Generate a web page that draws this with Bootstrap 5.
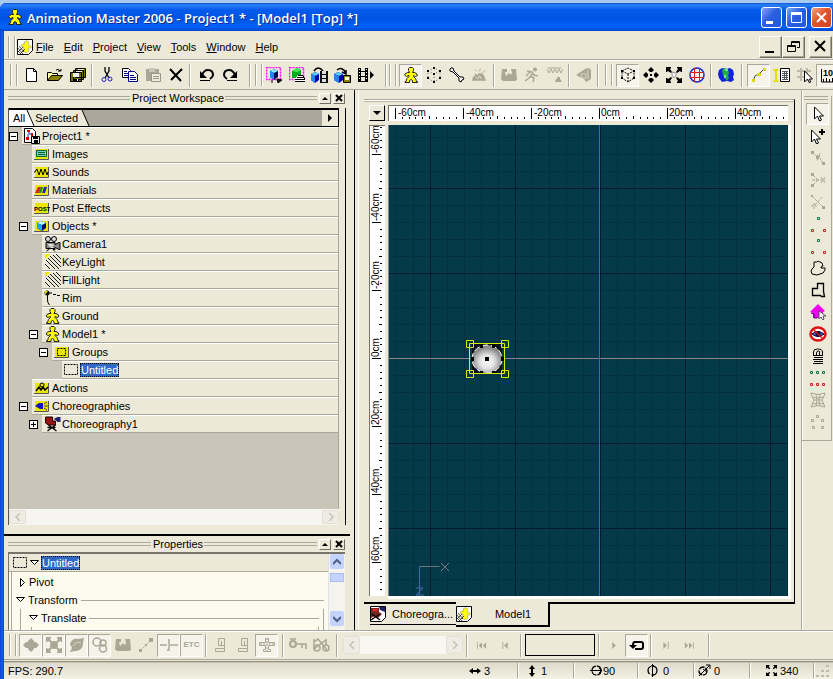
<!DOCTYPE html>
<html lang="en">
<head>
<meta charset="utf-8">
<meta name="viewport" content="width=device-width, initial-scale=1">
<title>Animation Master 2006</title>
<link href="https://cdn.jsdelivr.net/npm/bootstrap@5.3.0/dist/css/bootstrap.min.css" rel="stylesheet">
<style>
:root{--face:#ece9d8;--shade:#aca899;--dim:#aaa797;--sel:#316ac5}
body{font:11px/14px "Liberation Sans",Arial,sans-serif;color:#000;background:#a9c9ee}
button{font:inherit;color:inherit;background:none;border:0;padding:0}
svg{display:block;flex:none}
.app{height:100vh;padding-top:3px}
.frame{background:linear-gradient(90deg,#0a3fd0,#1560f0 2px,#0a3fd0 4px,#0a3fd0);padding-left:4px;border-radius:6px 0 0 0;min-height:0}
.inner{background:var(--face);min-height:0}
.titlebar{height:28px;margin-left:-4px;padding:0 1px 0 7px;border-radius:6px 0 0 0;background:linear-gradient(#0b52cf,#2b80fa 2px,#0559ec 7px,#0054e3 16px,#0162fb 24px,#0046c8)}
.titlebar h1{font:600 13px/16px "Open Sans","Noto Sans",sans-serif;color:#fff;text-shadow:1px 1px #0a2a90;margin:2px 0 0 4px}
.wbtn{width:21px;height:21px;border:1px solid #fff;border-radius:3px;background:linear-gradient(135deg,#7fa5f5,#2a5fe0 45%,#2357dd)}
.wbtn.shut{background:linear-gradient(135deg,#f0a18a,#e2532c 45%,#cf4320)}
.menubar{height:29px;border-bottom:1px solid var(--shade);padding:3px 1px 0 4px}
.menubar .grip{margin-right:2px}
.menubar svg.doc-ic{margin-right:3px}
.menubar a{color:#000;text-decoration:none;margin-right:10px}
.menubar u{text-decoration:underline;text-underline-offset:1px}
.mbtn{width:23px;height:22px;border:1px solid;border-color:#fff #716f64 #716f64 #fff;box-shadow:inset -1px -1px var(--shade)}
.tools{height:30px;border-top:1px solid #fff;border-bottom:1px solid var(--shade);overflow:hidden;padding-left:6px}
.grip{width:7px;height:22px;flex:none;border-left:1px solid var(--shade);border-right:1px solid var(--shade);box-shadow:inset 1px 0 #fff,inset -2px 0 var(--face),1px 0 #fff;margin-right:3px}
.tb{width:23px;height:23px;flex:none;display:flex;align-items:center;justify-content:center;border:1px solid transparent}
.on{border-color:var(--shade) #fff #fff var(--shade);background:#f5f3ea}
.etc{font-size:8px;font-weight:700}
.sep{width:2px;height:23px;flex:none;margin:0 2px;border-left:1px solid var(--shade);border-right:1px solid #fff}
.off{color:var(--dim)}
.work{min-height:0}
.left{width:346px;flex:none;padding:0 5px 0 4px}
.paneltitle{height:16px;gap:2px}
.paneltitle i{flex:1;height:4px;border:solid var(--shade);border-width:1px 0}
.paneltitle h2{font-size:11px;line-height:14px;margin:0;font-weight:400}
.paneltitle h2{margin-right:-1px}
.paneltitle i.lead-rule{flex:1 1 30px}
.paneltitle i.tail-rule{flex:1 1 0}
.pbtn{width:12px;height:11px;border:1px solid;border-color:#fff #716f64 #716f64 #fff}
.treebox{flex:1 1 0;min-height:0;border-left:1px solid #555;border-right:1px solid #000;padding-right:6px;margin:2px -1px 0 0}
.tabstrip{height:19px;background:#aca79c;border:solid #000;border-width:2px 1px 1px 0;flex:none}
.tab-t{height:16px;line-height:17px}
.tab-plain{background:var(--face)}
.tree{flex:1 1 0;min-height:0;background:#c9c5b8;list-style:none;margin:0;padding:0;border-right:1px solid var(--shade)}
.tree li{display:flex;height:18px;align-items:center}
.trow{flex:1;height:18px;display:flex;align-items:center;gap:2px;background:var(--face);border-top:1px solid #fff;border-bottom:1px solid var(--shade);padding-left:2px}
.l2 .trow{gap:1px}
.exp{width:9px;height:9px;flex:none;background:#fff;border:1px solid #000;margin-right:4px;display:block;position:relative}
.exp::after,.exp.plus::before{content:"";position:absolute;left:1px;top:3px;width:5px;height:1px;background:#000}
.exp.plus::before{left:3px;top:1px;width:1px;height:5px}
.noexp{width:13px;flex:none}
.l1{padding-left:10px}.l2{padding-left:20px}.l3{padding-left:30px}.l4{padding-left:40px}
.pick{background:var(--sel);color:#fff;outline:1px dotted #000;outline-offset:-1px;padding:0 1px}
.hbar{height:16px;background:#f6f5f1;flex:none}
.sbtn{width:17px;height:14px;background:#eeece4;color:#c5c2b6;display:flex;align-items:center;justify-content:center;border:1px solid #e4e1d4;border-radius:2px}
.props{height:96px;flex:none;border-top:2px solid #000;margin:9px -5px 0 -4px;padding:0 5px 0 4px}
.propbox{border:solid #77756b;border-width:2px 0 0 1px;background:#fdfbee;height:78px;overflow:hidden}
.propbox .head{height:18px;gap:3px;background:var(--face);border-bottom:1px solid var(--shade);padding-left:4px}
.propbox .head .pick{margin-left:-1px}
.prow{height:18px;display:flex;align-items:center;gap:3px}
.prow b{flex:1;height:1px;background:var(--shade);font-weight:400}
.lvl-a{margin:0 4px 0 2px;padding-top:1px}
.lvl-b{margin-left:8px}
.lvl-c{margin:0 4px 0 10px;height:14px}
.vbar{width:16px;background:#f4f3ee;flex:none}
.vbar button{width:14px;height:15px;background:#c3d3fd;color:#4d6185;border-radius:2px;display:flex;align-items:center;justify-content:center}
.thumb{width:14px;height:9px;background:#c3d3fd;border:1px solid #a9bff0}
.child{border:solid var(--shade);border-width:0 1px 0 1px}
.gap-bar{width:5px;flex:none;border-left:1px solid #000;border-right:1px solid #fff}
.doc{flex:1;min-width:0;min-height:0;padding:9px 6px 0 3px}
.docwin{flex:1;min-height:0;border-top:1px solid var(--shade);border-right:1px solid #000;border-bottom:2px solid #000;box-shadow:inset 0 1px #fff,inset 0 2px #bbb8aa;padding:5px 6px 6px 5px;margin-left:2px}
.viewrow{gap:3px;min-height:0}
.rulerbox{background:#fff;border:solid #77756b;border-width:1px 0 0 1px;overflow:hidden}
.corner{width:16px;height:16px;border:1px solid;border-color:#fff #000 #000 #fff;flex:none}
.ruler{font:10px "Liberation Sans",Arial,sans-serif}
.view{background:#053a4a;min-width:0;border-left:1px solid #888;box-shadow:3px 0 #fff,0 3px #fff,3px 3px #fff}
.dtabs{height:26px;flex:none;padding-left:8px}
.dtab{height:21px;width:86px;border-bottom:1px solid #000;display:flex;align-items:center;gap:6px}
.dtab.now{width:94px;height:25px;margin-top:-2px;background:var(--face);border-right:2px solid #000;border-bottom:2px solid #000}
.side{width:32px;flex:none;border-left:1px solid var(--shade);padding-top:6px;box-shadow:inset 1px 0 #fff}
.sidebox{border:solid var(--shade);border-width:0 1px 1px 0;width:30px;padding:0 0 7px 4px}
.sidebox .tb{height:22px}
.sgrip{width:24px;height:4px;border:solid var(--shade);border-width:1px 0;margin:0 0 3px -2px}
.bottom{height:30px;border-top:1px solid var(--shade);border-bottom:1px solid var(--shade);box-shadow:inset 0 1px #fff;overflow:hidden;padding-left:5px}
.slide{width:120px;height:18px;background:#f8f7f2;margin:0 1px}
.slide .sbtn{height:18px}
.frameno{width:70px;height:22px;border:1px solid #000;background:var(--face);border-radius:0;font-size:11px;padding:0 4px;margin:0 1px}
.status{height:18px;margin-top:1px;border-top:1px solid #8f8c80;box-shadow:inset 0 1px #c8c5b6;background:linear-gradient(#dedac9,#f3f1e4)}
.cell{height:15px;border-right:1px solid var(--shade);box-shadow:1px 0 #fff;display:flex;align-items:center;gap:3px}
.c0{width:49px}.c1{width:56px}.c2{width:64px}
</style>
</head>
<body class="overflow-hidden">
<svg width="0" height="0" class="position-absolute" aria-hidden="true">
<defs>
<symbol id="man" viewBox="0 0 16 16"><path d="M6.500.5h3l1 1v2l-1 2h2l2 1 1 2-2 1-2-1v1l2 2 1 3h1v1h-5v-2l-1.500-1-1.500 1v2H2v-1h1l1-3 2-2v-1L3.500 9.500 1.500 8l1-1.500 2-1h2l-1-2v-2z" fill="#ff0" stroke="#222"/></symbol>
<symbol id="manbox" viewBox="0 0 16 16"><path d="M.5.5h15v11l-4 4H.5z" fill="#fff" stroke="#000"/><path d="M8 2h3l1 2-1 2 3 1v2h-3l1 3-3 2-3-2 1-4-3-1 1-2h3L7 4z" fill="#ff0" stroke="#aa9" stroke-width=".7"/><path d="M0 8l6 7M0 11l4 4M2 7l5 6M0 14l6-6M3 15l5-5" stroke="#221" stroke-width=".8"/></symbol>
<symbol id="new" viewBox="0 0 16 16"><path d="M2.500 1.500h7l3 3v10h-10z" fill="#fff" stroke="#000"/><path d="M9.500 1.500v3h3" fill="none" stroke="#000"/></symbol>
<symbol id="open" viewBox="0 0 16 16"><path d="M.5 13.500v-8h4l1 1h5v2" fill="#ffffb0" stroke="#000"/><path d="M.5 13.500l4-5h11l-4 5z" fill="#8a8200" stroke="#000"/><path d="M9 3q3-2 4 1m-2 0h3V2" fill="none" stroke="#000"/></symbol>
<symbol id="saveall" viewBox="0 0 16 16"><path d="M5.500 1.500h10v9h-10zM3.500 3.500h10v9h-10zM.5 5.500h11v9H.5z" fill="#777000" stroke="#000"/><path d="M3 6h6v4H3zM6 4h6v1H6zM8 2h6v1H8z" fill="#eee"/><path d="M3 12h6v3H3z" fill="#000"/><path d="M7 12h1v2H7z" fill="#fff"/></symbol>
<symbol id="cut" viewBox="0 0 16 16"><path d="M6 0v4l4 7M10 0v4L6 11" fill="none" stroke="#000" stroke-width="1.300"/><circle cx="5" cy="12.500" r="2" fill="none" stroke="#22c"/><circle cx="11" cy="12" r="2" fill="none" stroke="#22c"/></symbol>
<symbol id="copy" viewBox="0 0 16 16"><path d="M.5 1.500h6l2 2v7h-8z" fill="#fff" stroke="#000"/><path d="M6.500 4.500h6l3 3v7h-9z" fill="#fff" stroke="#008"/><path d="M2 4.500h3M2 6.500h4M2 8.500h4M8 8.500h4M8 10.500h6M8 12.500h6" stroke="#008"/></symbol>
<symbol id="paste" viewBox="0 0 16 16"><path d="M1 2h13v12H1z" fill="#aaa797"/><path d="M4 1h6v4H4z" fill="#c9c6b7"/><path d="M6.500 6.500h9v8h-9z" fill="#eeebdd" stroke="#999688"/><path d="M8 9.500h6M8 11.500h6" stroke="#999688"/></symbol>
<symbol id="del" viewBox="0 0 16 16"><path d="M2 2l11 12M14 2L3 13" stroke="#000" stroke-width="2"/></symbol>
<symbol id="undo" viewBox="0 0 16 16"><path d="M3 8q2-5 6-5 5 0 5 5 0 2-3 4" fill="none" stroke="#000" stroke-width="2"/><path d="M1 4v7h7zM1 13h10v1H1z"/></symbol>
<symbol id="redo" viewBox="0 0 16 16"><path d="M13 8q-2-5-6-5-5 0-5 5 0 2 3 4" fill="none" stroke="#000" stroke-width="2"/><path d="M15 4v7H8zM5 13h10v1H5z"/></symbol>
<symbol id="selcube" viewBox="0 0 16 16"><path d="M.5.500h14v12H.5z" fill="none" stroke="#f0f" stroke-width="1.500" stroke-dasharray="2 1"/><path d="M4 4l4-2 4 2v6l-4 3-4-3z" fill="#006"/><path d="M4 4l4-2 4 2-4 2z" fill="#8ef"/><path d="M4 4l4 2v7l-4-3z" fill="#28f"/><path d="M6 13v3M11 12l5 1-4 3z" stroke="#000"/></symbol>
<symbol id="selgreen" viewBox="0 0 16 16"><path d="M.5.500h14v12H.5z" fill="none" stroke="#f0f" stroke-width="1.500" stroke-dasharray="2 1"/><path d="M3 4l5-3 4 2v8H3z" fill="#0a2"/><path d="M3 4l5-3 4 2-4 2z" fill="#4e5"/><path d="M6 12l3-4h5l2 5v2H6z" fill="#fff"/><path d="M6 14.500h10M6 12.500h10M8 10.500h7M9 8.500h5l2 4" fill="none" stroke="#000"/></symbol>
<symbol id="cubefilm" viewBox="0 0 17 16"><path d="M0 7l4-2 4 2v6l-4 3-4-3z" fill="#00a"/><path d="M0 7l4-2 4 2-4 2z" fill="#5cf"/><path d="M0 7l4 2v7l-4-3z" fill="#28e"/><path d="M3 4q4-6 9 0" fill="none" stroke="#000" stroke-width="1.500"/><path d="M9 4h8v12H9z" fill="#111"/><path d="M11 4h4v3h-4zM11 8h4v3h-4zM11 12h4v3h-4z" fill="#ddd"/></symbol>
<symbol id="cubesave" viewBox="0 0 17 16"><path d="M0 7l4-2 5 2v6l-4 3-5-3z" fill="#00a"/><path d="M0 7l4-2 5 2-4 2z" fill="#5cf"/><path d="M0 7l5 2v7l-5-3z" fill="#28e"/><path d="M3 3q5-4 9 3m-4-1 4 2V3" fill="none" stroke="#000" stroke-width="1.500"/><path d="M9.500 8.500h7v7h-7z" fill="#8a8200" stroke="#000"/><path d="M11 10h4v3h-4z" fill="#ffe"/></symbol>
<symbol id="film" viewBox="0 0 16 16"><path d="M0 1h10v14H0z" fill="#000"/><path d="M3 1h4v3H3zM3 5h4v4H3zM3 10h4v4H3z" fill="#ece9d8"/><path d="M1 2h1v1H1zM1 5h1v1H1zM1 8h1v1H1zM1 11h1v1H1zM8 2h1v1H8zM8 5h1v1H8zM8 8h1v1H8zM8 11h1v1H8z" fill="#fff"/><path d="M12 4l4 4-4 4z"/></symbol>
<symbol id="dots" viewBox="0 0 16 16"><path d="M2 4l6-3 6 3v7l-6 4-6-4zM2 4l6 3 6-3M8 7v8" fill="none" stroke="#666" stroke-dasharray="1 2"/><path d="M1 3h2v2H1zM7 0h2v2H7zM13 3h2v2h-2zM1 10h2v2H1zM7 14h2v2H7zM13 10h2v2h-2zM7 6h2v2H7z"/></symbol>
<symbol id="cubeline" viewBox="0 0 16 16"><path d="M2 4l6-3 6 3v7l-6 4-6-4zM2 4l6 3 6-3M8 7v8" fill="none" stroke="#000" stroke-dasharray="2 1"/><path d="M1 3h2v2H1zM13 3h2v2h-2zM1 10h2v2H1zM13 10h2v2h-2z"/></symbol>
<symbol id="bone" viewBox="0 0 16 16"><path d="M2 1l2 0 1 3 6 6 3 0 1 2-2 1-1 2-2-1 0-3-6-6-3-1 0-2z" fill="#fff" stroke="#000"/></symbol>
<symbol id="blob" viewBox="0 0 16 16"><path d="M0 14l1-4 2-1 0-3 3 2 1-2h4l2 3 2 5v0z" fill="currentColor"/><path d="M3 2l2 2M9 1l-1 3M14 3l-3 3" stroke="currentColor"/><path d="M4 10l2 2 2-3 2 3" stroke="#ece9d8" fill="none"/></symbol>
<symbol id="arm" viewBox="0 0 16 16"><path d="M1 2h5v3H4l1 4 3-3 2 2 1-2-1-4h5l1 11-2 1H2L0 12z" fill="currentColor"/></symbol>
<symbol id="run" viewBox="0 0 16 16"><circle cx="11" cy="2.500" r="2" fill="currentColor"/><path d="M3 4l5 1 2 3 4 1M9 6l-4 5-4 3M6 9l4 2-1 4M2 9l4-4" fill="none" stroke="currentColor" stroke-width="1.500"/></symbol>
<symbol id="waves" viewBox="0 0 16 16"><path d="M0 2l2 4 2-4 2 4 2-4 2 4 2-4 2 4 2-4M1 1h13" fill="none" stroke="currentColor"/><path d="M8 15l1-3h1v-2h3v2l2 3z" fill="currentColor"/></symbol>
<symbol id="horn" viewBox="0 0 16 16"><path d="M0 8l9-6 4-1 2 2v9l-5 3-2-3z" fill="currentColor"/><path d="M5 7h5v4H6zM12 3v9" fill="none" stroke="#d8d5c5"/></symbol>
<symbol id="move" viewBox="0 0 16 16"><path d="M8 0l3 3-2 2H7L5 3zM8 16l3-3-2-2H7l-2 2zM0 8l3-3 2 2v2l-2 2zM16 8l-3-3-2 2v2l2 2z" fill="currentColor"/><path d="M7 7h2v2H7z" fill="currentColor"/></symbol>
<symbol id="zoomx" viewBox="0 0 16 16"><path d="M0 0h5v1L4 2l2 3-1 1-3-2-1 1H0zM16 0h-5v1l1 1-2 3 1 1 3-2 1 1h1zM0 16h5v-1l-1-1 2-3-1-1-3 2-1-1H0zM16 16h-5v-1l1-1-2-3 1-1 3 2 1-1h1z" fill="currentColor"/></symbol>
<symbol id="zoomlens" viewBox="0 0 16 16"><use href="#zoomx"/><path d="M6 5l4 1v2l-2 3-2-3z" fill="#fff" stroke="#999"/></symbol>
<symbol id="orbit" viewBox="0 0 16 16"><circle cx="8" cy="8" r="7" fill="#f2f0ee" stroke="#22c" stroke-width="1.500"/><path d="M5.500 1v14M10.500 1v14M1 5.500h14M1 10.500h14" stroke="#c22" fill="none"/></symbol>
<symbol id="globe" viewBox="0 0 18 16"><path d="M2 3l3-2 4 1 4-1 3 2 1 4-1 3 1 3-3 2-4-1-5 1-3-4-1-4z" fill="#12d"/><path d="M5 3l3-2 3 2 1 3-1 3 1 2-2 3-2-3-2-3z" fill="#2a4"/><path d="M8 2h3v2H8zM7 8h2v3H7z" fill="#6e8"/></symbol>
<symbol id="curve" viewBox="0 0 16 16"><path d="M2 14l2-5 5-3 5-5" fill="none" stroke="#444"/><path d="M1 12h3v3H1zM6 6h4v3H6zM12 1h3v3h-3z" fill="#dcdc00"/></symbol>
<symbol id="panel" viewBox="0 0 17 16"><path d="M0 2h6L4 5v7l2 3H0l2-3V5z" fill="#e5e000"/><path d="M7.500 1.500h9v13h-9z" fill="#fff" stroke="#000"/><path d="M9 4.500h6M9 6.500h6M9 8.500h6M9 10.500h6M9 12.500h6M11.500 4v9M13.500 4v9" stroke="#555"/></symbol>
<symbol id="gridcur" viewBox="0 0 16 16"><path d="M0 4h14M0 10h14M4 1v13M10 1v13" stroke="#bcb9a8" stroke-width="2"/><path d="M7.500 4v11l3-3 2 4 1-1-1-3h3z" fill="#fff" stroke="#000"/></symbol>
<symbol id="rule" viewBox="0 0 16 16"><path d="M1.500 2v13h15M3.500 15v-3M6.500 15v-4M9.500 15v-3M12.500 15v-4M15.500 15v-3" fill="none" stroke="#000"/><text x="3" y="9" font-size="9" font-weight="700">10</text></symbol>
<symbol id="proj" viewBox="0 0 16 16"><path d="M.5.5h8l3 3v11H.5z" fill="#fff" stroke="#000"/><path d="M3 3h2v3h3v4h2M4 6v5H2" stroke="#22c" fill="none"/><path d="M3 2h3v2H3zM7 5h2v3H7zM2 9h3v3H2z" fill="#d00"/><path d="M7.500 8.500h8v7h-8z" fill="#eee" stroke="#000"/><path d="M10 12h4v3h-4zM9 9h5v2H9z"/></symbol>
<symbol id="fold" viewBox="0 0 16 12"><path d="M1 1h14v10H1z" fill="#e9e600"/><path d="M0 11.500h14.500V1" fill="none" stroke="#555"/></symbol>
<symbol id="f-img" viewBox="0 0 16 12"><use href="#fold"/><path d="M2.500 2.500h10v6h-10z" fill="#7cb" stroke="#063"/><path d="M4 4.500h7M4 6.500h7" stroke="#063"/></symbol>
<symbol id="f-snd" viewBox="0 0 16 12"><use href="#fold"/><path d="M0 6h1l2-3 2 6 2-6 2 6 2-6 2 6 1-3" fill="none" stroke="#000"/></symbol>
<symbol id="f-mat" viewBox="0 0 16 12"><use href="#fold"/><path d="M1 9l3-6h3L5 9z" fill="#d22"/><path d="M5 9l2-6h2L7 9z" fill="#182"/><path d="M8 9l2-6h3l-2 6z" fill="#22c"/></symbol>
<symbol id="f-post" viewBox="0 0 16 12"><use href="#fold"/><text x="0" y="9" font-size="6" font-weight="700">POST</text></symbol>
<symbol id="f-obj" viewBox="0 0 16 14"><path d="M1 2h14v10H1z" fill="#e9e600"/><path d="M0 12.500h14.500V2" fill="none" stroke="#555"/><path d="M3 4l4-2 5 2v5l-4 3-5-3z" fill="#007"/><path d="M3 4l4-2 5 2-4 2z" fill="#bff"/><path d="M3 4l5 2v6L3 9z" fill="#1af"/></symbol>
<symbol id="f-grp" viewBox="0 0 16 12"><use href="#fold"/><path d="M3.500 2.500h8v7h-8z" fill="none" stroke="#000" stroke-dasharray="2 1"/></symbol>
<symbol id="f-act" viewBox="0 0 16 12"><use href="#fold"/><circle cx="8" cy="3" r="2" fill="none" stroke="#000"/><path d="M2 9l3-4 2 3 2-3 2 3 3-3" fill="none" stroke="#000" stroke-width="1.500"/></symbol>
<symbol id="f-cho" viewBox="0 0 16 12"><use href="#fold"/><path d="M1 6l4-3h4v6H6z" fill="#11b"/><path d="M10 6h4M10 4l3-2M10 8l3 2" stroke="#444"/></symbol>
<symbol id="cam" viewBox="0 0 16 16"><circle cx="3.500" cy="3" r="2.500" fill="#ddd" stroke="#000"/><circle cx="9.500" cy="3" r="2.500" fill="#ddd" stroke="#000"/><path d="M1.500 6.500h9v2l4-2h1v7h-1l-4-2v2h-2l2 2M5 13l-3 2M1.500 6.500v6h9" fill="#888" stroke="#000"/><path d="M4 8h5v2H4z" fill="#ddd"/></symbol>
<symbol id="light" viewBox="0 0 17 16"><path d="M1 0h5L4 3 1 5z" fill="#f0ec00"/><path d="M6 2l11 11M4 4l11 11M2 6l9 9M1 10l5 5M9 1l8 8M12 0l5 5" stroke="#000" stroke-width=".9" fill="none"/></symbol>
<symbol id="rim" viewBox="0 0 17 16"><circle cx="3" cy="3" r="2.500"/><path d="M1 1h3L1 5z" fill="#dd0"/><path d="M5 3l3 0M9 4.500h3M13 5.500h3M3.500 5v5q0 3 2 5" fill="none" stroke="#000"/></symbol>
<symbol id="group" viewBox="0 0 14 12"><path d="M.5.5h13v10H.5z" fill="none" stroke="#000" stroke-dasharray="2 1"/></symbol>
<symbol id="chair" viewBox="0 0 16 16"><path d="M1 1h7v4h3v4H4L1 7z" fill="#911" stroke="#200"/><path d="M9 3l4-2 3 0v5h-3l-2-2z" fill="#226"/><path d="M3 15l8-6M12 15L4 9M3 11.500h8" stroke="#000" stroke-width="1.300"/></symbol>
<symbol id="chairbox" viewBox="0 0 16 16"><path d="M.5.5h15v11l-4 4H.5z" fill="#fff" stroke="#000"/><path d="M1 2h8v4l3 2-4 4-3-2-4 2z" fill="#822"/><path d="M9 1h6v5l-5-2z" fill="#226"/><path d="M1 14l9-6M2 8l8 6" stroke="#000" stroke-width="1.500"/><path d="M3 3h4v2H3z" fill="#f22"/></symbol>
<symbol id="tri-d" viewBox="0 0 9 6"><path d="M.5.5h8l-4 4z" fill="#fff" stroke="#000"/></symbol>
<symbol id="tri-r" viewBox="0 0 6 9"><path d="M.5.5v8l4-4z" fill="#fff" stroke="#000"/></symbol>
<symbol id="ch-l" viewBox="0 0 8 8"><path d="M6 0L2 4l4 4" fill="none" stroke="currentColor" stroke-width="1.500"/></symbol>
<symbol id="ch-r" viewBox="0 0 8 8"><path d="M2 0l4 4-4 4" fill="none" stroke="currentColor" stroke-width="1.500"/></symbol>
<symbol id="ch-u" viewBox="0 0 8 8"><path d="M0 6l4-4 4 4" fill="none" stroke="currentColor" stroke-width="2"/></symbol>
<symbol id="ch-d" viewBox="0 0 8 8"><path d="M0 2l4 4 4-4" fill="none" stroke="currentColor" stroke-width="2"/></symbol>
<symbol id="arrow" viewBox="0 0 16 16"><path d="M4.500 1v12l3-3 2 5 2-1-2-4h4z" fill="#fff" stroke="#000"/></symbol>
<symbol id="arrowp" viewBox="0 0 16 16"><path d="M1.500 2v12l3-3 2 5 2-1-2-4h4z" fill="#fff" stroke="#000"/><path d="M12 1v6M9 4h6" stroke="#000" stroke-width="2"/></symbol>
<symbol id="n1" viewBox="0 0 16 16"><path d="M2 2l4 4 3-1 2 6 4 2M10 3l-3 8" fill="none" stroke="currentColor" stroke-dasharray="2 1"/><path d="M1 1h3v3H1zM12 12h3v3h-3zM6 6h3v3H6z" fill="currentColor"/></symbol>
<symbol id="n2" viewBox="0 0 16 16"><path d="M2 8h13M3 3l6 6M3 13l6-6M11 5l4 6M15 5l-4 6" stroke="currentColor" fill="none" stroke-dasharray="3 1"/><path d="M1 1h3v3H1zM1 12h3v3H1z" fill="currentColor"/></symbol>
<symbol id="n3" viewBox="0 0 16 16"><path d="M2 2l5 5 6 6M12 3L5 11M1 12h6M4 9v6" stroke="currentColor" fill="none" stroke-dasharray="3 1"/><path d="M1 1h2v2H1zM12 12h3v3h-3z" fill="currentColor"/></symbol>
<symbol id="tripts" viewBox="0 0 16 16"><path d="M7.500 1.500h2v2h-2z" fill="none" stroke="#174"/><path d="M1.500 13.500h2v2h-2zM13.500 13.500h2v2h-2z" fill="none" stroke="#c22"/></symbol>
<symbol id="lasso" viewBox="0 0 16 16"><path d="M4 2h3l1-1 4 2 1 3-2 1v1h4v2l-2 3-6 2-5-1-1-3 1-2 2-2z" fill="none" stroke="#000"/></symbol>
<symbol id="poly" viewBox="0 0 16 16"><path d="M7.500 1.500h6v8l1 5h-3l-1-1h-8v-7h5z" fill="none" stroke="#000" stroke-width="1.300"/></symbol>
<symbol id="house" viewBox="0 0 16 16"><path d="M8 0l3 3 4 4-2 1v6H3V9L0 8z" fill="#e0e"/><path d="M1 9l3 1v4h3" stroke="#508" fill="none"/><path d="M9 7v8l2-2 2 3 1-1-1-3h3z" fill="#fff" stroke="#555"/></symbol>
<symbol id="eye" viewBox="0 0 18 16"><ellipse cx="9" cy="8" rx="7.500" ry="6.500" fill="#fff" stroke="#d11" stroke-width="2.500"/><path d="M3 8q6-5 12 0-6 5-12 0" fill="#56c" stroke="#003"/><circle cx="9" cy="8" r="2.500" fill="#004"/><path d="M5 4l8 8" stroke="#d11" stroke-width="1.500"/></symbol>
<symbol id="lock" viewBox="0 0 16 16"><path d="M3.500 7V4q0-3 4-3 5 0 5 3v3M6.500 7V5q0-2 2-2t1 2v2" fill="none" stroke="#000"/><path d="M3 7.500h10M4 9.500h9M3 11.500h10M4 13.500h9M3 15.500h10" stroke="#000"/></symbol>
<symbol id="rows" viewBox="0 0 16 16"><path d="M.5 1.500h2v2h-2zM6.500 1.500h2v2h-2zM12.500 1.500h2v2h-2z" fill="none" stroke="#174"/><path d="M.5 13.500h2v2h-2zM6.500 13.500h2v2h-2zM12.500 13.500h2v2h-2z" fill="none" stroke="#c22"/></symbol>
<symbol id="mesh" viewBox="0 0 16 16"><path d="M1 1q7 3 14 0-1 4-3 7l3 7q-7-3-14 0l3-7Q2 5 1 1M2 5q6 2 12 0M4 8h8M2 12q6-2 12 0M6 2q2 6 0 12M10 2q-2 6 0 12" fill="none" stroke="currentColor"/></symbol>
<symbol id="pts" viewBox="0 0 16 16"><path d="M6.500 1.500h2v2h-2zM1.500 5.500h2v2h-2zM11.500 5.500h2v2h-2zM2.500 12.500h2v2h-2zM11.500 12.500h2v2h-2z" fill="none" stroke="currentColor"/></symbol>
<symbol id="diam" viewBox="0 0 16 16"><path d="M8 1l3 3v1l2 0 3 3-3 3h-2v1l-3 3-3-3v-1H3L0 8l3-3h2V4z" fill="currentColor"/></symbol>
<symbol id="scale" viewBox="0 0 16 16"><use href="#zoomx"/><circle cx="8" cy="8" r="4" fill="currentColor"/></symbol>
<symbol id="rot" viewBox="0 0 16 16"><path d="M1 7q2-6 8-5l6-1-1 5q0 8-8 8l-5 1 2-4z" fill="currentColor"/><path d="M4 9q3-5 8-3" fill="none" stroke="#dedbcb"/></symbol>
<symbol id="rings" viewBox="0 0 16 16"><circle cx="5" cy="5" r="4" fill="none" stroke="currentColor" stroke-width="1.500"/><circle cx="11" cy="6" r="3" fill="none" stroke="currentColor" stroke-width="1.500"/><circle cx="11" cy="11.500" r="3.500" fill="none" stroke="currentColor" stroke-width="1.500"/></symbol>
<symbol id="seg" viewBox="0 0 16 16"><path d="M3 13l10-10" stroke="currentColor" stroke-dasharray="2 1"/><path d="M1 12h3v3H1zM7 7h2v2H7zM11 1h4v4h-4z" fill="currentColor"/></symbol>
<symbol id="brk" viewBox="0 0 18 16"><path d="M0 8h7M11 8h7M8 3h1v4l1 1-1 1v4H7" fill="none" stroke="currentColor" stroke-width="1.500"/></symbol>
<symbol id="boxes" viewBox="0 0 16 16"><path d="M5.500 1.500h6v13h-9v-3h9M5.500 1.500v7h6M8.500 4v4" fill="none" stroke="currentColor"/></symbol>
<symbol id="plane" viewBox="0 0 16 16"><path d="M6.500 1.500h3v4h6v3h-6v4h2v2h-7v-2h2v-4h-6v-3h6z" fill="none" stroke="currentColor"/><path d="M8 1v14M1 7h14" stroke="currentColor" stroke-dasharray="2 1"/></symbol>
<symbol id="key" viewBox="0 0 18 16"><circle cx="4" cy="7" r="3" fill="none" stroke="currentColor" stroke-width="2"/><path d="M1 2h6M7 7h10v5M13 7v4" fill="none" stroke="currentColor" stroke-width="1.500"/></symbol>
<symbol id="keys" viewBox="0 0 18 16"><path d="M2 2v10l12-9v5M2 5l4-3 9 11" fill="none" stroke="currentColor" stroke-width="1.500"/><circle cx="5" cy="11" r="3" fill="none" stroke="currentColor" stroke-width="1.500"/><circle cx="14" cy="11" r="3" fill="none" stroke="currentColor" stroke-width="1.500"/></symbol>
<symbol id="first" viewBox="0 0 12 8"><path d="M0 0h1v8H0zM6 0L2 4l4 4zM11 0L7 4l4 4z" fill="currentColor"/></symbol>
<symbol id="prev" viewBox="0 0 8 8"><path d="M1 0h1v8H1zM7 0L3 4l4 4z" fill="currentColor"/></symbol>
<symbol id="play" viewBox="0 0 8 8"><path d="M2 0l4 4-4 4z" fill="currentColor"/></symbol>
<symbol id="next" viewBox="0 0 8 8"><path d="M1 0l4 4-4 4zM6 0h1v8H6z" fill="currentColor"/></symbol>
<symbol id="last" viewBox="0 0 12 8"><path d="M1 0l4 4-4 4zM6 0l4 4-4 4zM11 0h1v8h-1z" fill="currentColor"/></symbol>
<symbol id="loop" viewBox="0 0 16 16"><path d="M6 12h6q2 0 2-2V7q0-2-2-2H6q-2 0-2 3" fill="none" stroke="#000" stroke-width="2"/><path d="M0 8h8l-4 4z"/></symbol>
<symbol id="s-h" viewBox="0 0 12 12"><path d="M0 6l4-3v2h4V3l4 3-4 3V7H4v2z"/></symbol>
<symbol id="s-v" viewBox="0 0 12 12"><path d="M6 0l3 4H7v4h2l-3 4-3-4h2V4H3z"/></symbol>
<symbol id="s-r" viewBox="0 0 13 13"><circle cx="6.500" cy="6.500" r="4.500" fill="none" stroke="#000" stroke-width="1.300" stroke-dasharray="6 1"/><path d="M0 6.500h12M9 4l3 2.500L9 9" fill="none" stroke="#000"/></symbol>
<symbol id="s-y" viewBox="0 0 13 13"><circle cx="6.500" cy="6.500" r="4.500" fill="none" stroke="#000" stroke-width="1.300" stroke-dasharray="8 2"/><path d="M6.500 0v13M4 3l2.500-2L9 3" stroke="#000" fill="none"/></symbol>
<symbol id="s-z" viewBox="0 0 13 13"><circle cx="5" cy="7" r="4" fill="none" stroke="#000" stroke-width="1.300" stroke-dasharray="6 1"/><path d="M1 12L12 1M8 1h4v4M5 5l4 3" stroke="#000" fill="none"/></symbol>
<pattern id="minor" x="7" y="12" width="17" height="17" patternUnits="userSpaceOnUse"><path d="M0 .5h17M.5 0v17" stroke="#043042"/></pattern>
<pattern id="major" x="41" y="63" width="85" height="85" patternUnits="userSpaceOnUse"><path d="M0 .5h85M.5 0v85" stroke="#001b2c"/></pattern>
<pattern id="tickh" x="6" y="0" width="68" height="15" patternUnits="userSpaceOnUse"><path d="M.5 2v11M7.500 11v2M14.500 11v2M20.500 11v2M27.500 11v2M34.500 10v3M41.500 11v2M48.500 11v2M54.500 11v2M61.500 11v2" stroke="#000"/></pattern>
<pattern id="tickv" x="0" y="28" width="15" height="68" patternUnits="userSpaceOnUse"><path d="M2 .5h9M10 7.500h2M10 14.500h2M10 20.500h2M10 27.500h2M9 34.500h3M10 41.500h2M10 48.500h2M10 54.500h2M10 61.500h2" stroke="#000"/></pattern>
<radialGradient id="ball" cx=".5" cy=".6"><stop offset="0" stop-color="#fff"/><stop offset=".5" stop-color="#e0e0e0"/><stop offset="1" stop-color="#8a8a8a"/></radialGradient>
</defs>
</svg>

<div class="app d-flex flex-column">
<div class="frame d-flex flex-column flex-grow-1">
  <header class="titlebar d-flex align-items-center flex-shrink-0">
    <svg width="16" height="18"><use href="#man"/></svg>
    <h1 class="text-nowrap me-auto">Animation Master 2006 - Project1 * - [Model1 [Top] *]</h1>
    <div class="d-flex gap-1">
      <button class="wbtn" aria-label="Minimize"><svg width="19" height="19"><path d="M4 13h7v3H4z" fill="#fff"/></svg></button>
      <button class="wbtn" aria-label="Maximize"><svg width="19" height="19"><path d="M4.500 5v9.500h10V5" fill="none" stroke="#fff"/><path d="M4 4h11v3H4z" fill="#fff"/></svg></button>
      <button class="wbtn shut" aria-label="Close"><svg width="19" height="19"><path d="M5 5l9 9M14 5l-9 9" stroke="#fff" stroke-width="2"/></svg></button>
    </div>
  </header>

  <div class="inner d-flex flex-column flex-grow-1">
  <nav class="menubar d-flex align-items-center flex-shrink-0" aria-label="Main menu">
    <span class="grip"></span>
    <svg width="16" height="16" class="doc-ic"><use href="#manbox"/></svg>
    <a href="#"><u>F</u>ile</a><a href="#"><u>E</u>dit</a><a href="#"><u>P</u>roject</a><a href="#"><u>V</u>iew</a><a href="#"><u>T</u>ools</a><a href="#"><u>W</u>indow</a><a href="#" class="me-auto"><u>H</u>elp</a>
    <button class="mbtn" aria-label="Minimize document"><svg width="20" height="19"><path d="M5 14h9v2H5z"/></svg></button>
    <button class="mbtn me-1" aria-label="Restore document"><svg width="20" height="19"><path d="M8.500 8V4.500h8v6H14M8 5.500h9M4.500 8.500h8v6h-8zM4 9.500h9" fill="none" stroke="#000"/></svg></button>
    <button class="mbtn" aria-label="Close document"><svg width="20" height="19"><path d="M5 4l10 10M15 4L5 14" stroke="#000" stroke-width="2"/></svg></button>
  </nav>

  <div class="tools d-flex align-items-center flex-shrink-0" role="toolbar" aria-label="Standard">
    <span class="grip"></span>
    <button class="tb" aria-label="New"><svg width="16" height="16"><use href="#new"/></svg></button>
    <button class="tb" aria-label="Open"><svg width="16" height="16"><use href="#open"/></svg></button>
    <button class="tb" aria-label="Save all"><svg width="16" height="16"><use href="#saveall"/></svg></button>
    <span class="sep"></span>
    <button class="tb" aria-label="Cut"><svg width="16" height="16"><use href="#cut"/></svg></button>
    <button class="tb" aria-label="Copy"><svg width="16" height="16"><use href="#copy"/></svg></button>
    <button class="tb" aria-label="Paste"><svg width="16" height="16"><use href="#paste"/></svg></button>
    <button class="tb" aria-label="Delete"><svg width="16" height="16"><use href="#del"/></svg></button>
    <span class="sep me-1"></span>
    <button class="tb" aria-label="Undo"><svg width="16" height="16"><use href="#undo"/></svg></button>
    <button class="tb" aria-label="Redo"><svg width="16" height="16"><use href="#redo"/></svg></button>
    <span class="sep ms-2 me-1"></span><span class="grip me-0"></span>
    <button class="tb" aria-label="Render object"><svg width="16" height="16"><use href="#selcube"/></svg></button>
    <button class="tb" aria-label="Render lock"><svg width="16" height="16"><use href="#selgreen"/></svg></button>
    <button class="tb" aria-label="Render to film"><svg width="17" height="16"><use href="#cubefilm"/></svg></button>
    <button class="tb" aria-label="Save render"><svg width="17" height="16"><use href="#cubesave"/></svg></button>
    <button class="tb" aria-label="Film"><svg width="16" height="16"><use href="#film"/></svg></button>
    <span class="sep ms-2"></span><span class="grip"></span>
    <button class="tb on" aria-label="Modeling mode"><svg width="16" height="18"><use href="#man"/></svg></button>
    <button class="tb" aria-label="Distortion mode"><svg width="16" height="16"><use href="#dots"/></svg></button>
    <button class="tb" aria-label="Bones mode"><svg width="16" height="16"><use href="#bone"/></svg></button>
    <button class="tb off" aria-label="Grooming mode"><svg width="15" height="16"><use href="#blob"/></svg></button>
    <span class="sep"></span>
    <button class="tb off" aria-label="Muscle mode"><svg width="16" height="16"><use href="#arm"/></svg></button>
    <button class="tb off" aria-label="Skeletal mode"><svg width="16" height="16"><use href="#run"/></svg></button>
    <button class="tb off" aria-label="Dynamics mode"><svg width="16" height="16"><use href="#waves"/></svg></button>
    <span class="sep"></span>
    <button class="tb off" aria-label="Choreography mode"><svg width="16" height="16"><use href="#horn"/></svg></button>
    <span class="sep"></span><span class="grip mx-1"></span>
    <button class="tb on" aria-label="Standard view"><svg width="16" height="16"><use href="#cubeline"/></svg></button>
    <button class="tb" aria-label="Move view"><svg width="16" height="16"><use href="#move"/></svg></button>
    <button class="tb" aria-label="Zoom view"><svg width="16" height="16"><use href="#zoomlens"/></svg></button>
    <button class="tb" aria-label="Turn view"><svg width="16" height="16"><use href="#orbit"/></svg></button>
    <span class="sep"></span>
    <button class="tb" aria-label="Bird's eye"><svg width="18" height="16"><use href="#globe"/></svg></button>
    <span class="sep mx-1"></span>
    <button class="tb on" aria-label="Bias handles"><svg width="16" height="16"><use href="#curve"/></svg></button>
    <button class="tb" aria-label="Show manipulators"><svg width="17" height="16"><use href="#panel"/></svg></button>
    <button class="tb" aria-label="Snap to grid"><svg width="16" height="16"><use href="#gridcur"/></svg></button>
    <button class="tb on" aria-label="Rulers"><svg width="16" height="16"><use href="#rule"/></svg></button>
  </div>

  <main class="work d-flex flex-grow-1">
    <aside class="left d-flex flex-column">
      <div class="paneltitle d-flex align-items-center flex-shrink-0"><i class="lead-rule"></i><h2>Project Workspace</h2><i class="tail-rule"></i>
        <button class="pbtn" aria-label="Collapse workspace"><svg width="10" height="9"><path d="M2 6h6L5 3z"/></svg></button>
        <button class="pbtn" aria-label="Close workspace"><svg width="10" height="9"><path d="M2 1l6 6M8 1L2 7" stroke="#000" stroke-width="2"/></svg></button></div>
      <div class="treebox d-flex flex-column">
        <div class="tabstrip d-flex">
          <button class="tab-t d-flex bg-white ps-1" role="tab">All<svg width="10" height="16"><path d="M2 0h8v16z" fill="#ece9d8"/><path d="M2 0l7 16" stroke="#000"/></svg></button>
          <button class="tab-t d-flex" role="tab"><span class="d-block h-100 tab-plain">Selected</span><svg width="12" height="16"><path d="M0 0h4l7 16H0z" fill="#ece9d8"/><path d="M4 0l7 16" stroke="#000"/></svg></button>
          <button class="ms-auto tab-t px-1 tab-plain" aria-label="Scroll tabs"><svg width="8" height="9"><path d="M2 0v8l4-4z"/></svg></button>
        </div>
        <ul class="tree">
          <li><button class="exp" aria-label="Collapse"></button><div class="trow"><svg width="16" height="16"><use href="#proj"/></svg><span>Project1 *</span></div></li>
          <li class="l1"><span class="noexp"></span><div class="trow"><svg width="16" height="12"><use href="#f-img"/></svg>Images</div></li>
          <li class="l1"><span class="noexp"></span><div class="trow"><svg width="16" height="12"><use href="#f-snd"/></svg>Sounds</div></li>
          <li class="l1"><span class="noexp"></span><div class="trow"><svg width="16" height="12"><use href="#f-mat"/></svg>Materials</div></li>
          <li class="l1"><span class="noexp"></span><div class="trow"><svg width="16" height="12"><use href="#f-post"/></svg>Post Effects</div></li>
          <li class="l1"><button class="exp" aria-label="Collapse"></button><div class="trow"><svg width="16" height="14"><use href="#f-obj"/></svg>Objects *</div></li>
          <li class="l2"><span class="noexp"></span><div class="trow"><svg width="17" height="16"><use href="#cam"/></svg>Camera1</div></li>
          <li class="l2"><span class="noexp"></span><div class="trow"><svg width="17" height="16"><use href="#light"/></svg>KeyLight</div></li>
          <li class="l2"><span class="noexp"></span><div class="trow"><svg width="17" height="16"><use href="#light"/></svg>FillLight</div></li>
          <li class="l2"><span class="noexp"></span><div class="trow"><svg width="17" height="16"><use href="#rim"/></svg>Rim</div></li>
          <li class="l2"><span class="noexp"></span><div class="trow"><svg width="17" height="16"><use href="#man"/></svg>Ground</div></li>
          <li class="l2"><button class="exp" aria-label="Collapse"></button><div class="trow"><svg width="17" height="16"><use href="#man"/></svg>Model1 *</div></li>
          <li class="l3"><button class="exp" aria-label="Collapse"></button><div class="trow"><svg width="16" height="12"><use href="#f-grp"/></svg>Groups</div></li>
          <li class="l4"><span class="noexp"></span><div class="trow"><svg width="14" height="12"><use href="#group"/></svg><span class="pick">Untitled</span></div></li>
          <li class="l1"><span class="noexp"></span><div class="trow"><svg width="16" height="12"><use href="#f-act"/></svg>Actions</div></li>
          <li class="l1"><button class="exp" aria-label="Collapse"></button><div class="trow"><svg width="16" height="12"><use href="#f-cho"/></svg>Choreographies</div></li>
          <li class="l2"><button class="exp plus" aria-label="Expand"></button><div class="trow"><svg width="17" height="16"><use href="#chair"/></svg>Choreography1</div></li>
        </ul>
        <div class="hbar d-flex justify-content-between align-items-center">
          <button class="sbtn" aria-label="Scroll left"><svg width="8" height="8"><use href="#ch-l"/></svg></button>
          <button class="sbtn" aria-label="Scroll right"><svg width="8" height="8"><use href="#ch-r"/></svg></button>
        </div>
      </div>
      <section class="props">
        <div class="paneltitle d-flex align-items-center"><i class="lead-rule"></i><h2>Properties</h2><i class="tail-rule"></i>
          <button class="pbtn" aria-label="Collapse properties"><svg width="10" height="9"><path d="M2 6h6L5 3z"/></svg></button>
          <button class="pbtn" aria-label="Close properties"><svg width="10" height="9"><path d="M2 1l6 6M8 1L2 7" stroke="#000" stroke-width="2"/></svg></button></div>
        <div class="propbox d-flex">
          <div class="flex-grow-1 border-end">
            <div class="head d-flex align-items-center"><svg width="14" height="12"><use href="#group"/></svg><svg width="9" height="6"><use href="#tri-d"/></svg><span class="pick">Untitled</span></div>
            <div class="child lvl-a border-end-0">
              <div class="prow px-1"><span class="ps-1"><svg width="6" height="9"><use href="#tri-r"/></svg></span><span>Pivot</span></div>
              <div class="prow ps-1"><svg width="9" height="6"><use href="#tri-d"/></svg><span>Transform</span><b></b></div>
              <div class="child lvl-b">
                <div class="prow ps-2 pe-1"><svg width="9" height="6"><use href="#tri-d"/></svg><span>Translate</span><b></b></div>
                <div class="child lvl-c"></div>
              </div>
            </div>
          </div>
          <div class="vbar d-flex flex-column align-items-center">
            <button aria-label="Scroll up"><svg width="8" height="8"><use href="#ch-u"/></svg></button>
            <div class="thumb mt-1 mb-auto"></div>
            <button aria-label="Scroll down" class="mb-1"><svg width="8" height="8"><use href="#ch-d"/></svg></button>
          </div>
        </div>
      </section>
    </aside>
    <div class="gap-bar ms-1"></div>

    <section class="doc d-flex flex-column">
      <div class="docwin d-flex flex-column">
        <div class="viewrow d-flex flex-shrink-0 mb-1">
          <button class="corner" aria-label="View menu"><svg width="14" height="14"><path d="M3 5h8l-4 4z"/></svg></button>
          <div class="rulerbox flex-grow-1"><svg width="100%" height="15" class="ruler"><rect width="100%" height="15" fill="url(#tickh)"/>
            <text x="9" y="10">-60cm</text><text x="77" y="10">-40cm</text><text x="145" y="10">-20cm</text><text x="212" y="10">0cm</text><text x="280" y="10">20cm</text><text x="348" y="10">40cm</text></svg></div>
        </div>
        <div class="viewrow d-flex flex-grow-1">
          <div class="rulerbox flex-shrink-0"><svg width="15" height="100%" class="ruler"><rect width="15" height="100%" fill="url(#tickv)"/>
            <g transform="rotate(-90)"><text x="-27" y="9">-60cm</text><text x="-95" y="9">-40cm</text><text x="-163" y="9">-20cm</text><text x="-231" y="9">0cm</text><text x="-299" y="9">20cm</text><text x="-367" y="9">40cm</text><text x="-435" y="9">60cm</text></g></svg></div>
          <div class="view flex-grow-1">
            <svg width="100%" height="100%" role="img" aria-label="Top view of Model1">
              <rect width="100%" height="100%" fill="url(#minor)"/><rect width="100%" height="100%" fill="url(#major)"/>
              <path d="M0 233.500h2000" stroke="#8c8486"/><path d="M210.500 0v2000" stroke="#2a6fd0"/>
              <g fill="none" stroke="#d8f000">
                <path d="M83 219h30v30H83z" fill="#0a1418" stroke="none"/>
                <ellipse cx="98" cy="234" rx="15" ry="14" fill="url(#ball)" stroke="#fff" stroke-dasharray="6 3"/>
                <path d="M91 219h3v4h-3zM103 219h3v4h-3zM91 246h3v3h-3zM103 246h3v3h-3zM82 232h3v4h-3zM112 232h3v4h-3zM96 232h4v4h-4z" fill="#000" stroke="none"/>
                <path d="M80.500 218.500h35v30h-35z"/>
                <path d="M77.500 215.500h7v7h-7zM112.500 215.500h7v7h-7zM77.500 245.500h7v7h-7zM112.500 245.500h7v7h-7z"/>
              </g>
              <path d="M30.500 470v-28.500h20" fill="none" stroke="#6e7478"/><path d="M30.500 442v28" stroke="#4668a8"/><path d="M52 438l8 8M60 438l-8 8" stroke="#7c7a80"/><path d="M27 463h7l-7 7h8" fill="none" stroke="#4668a8"/>
            </svg>
          </div>
        </div>
      </div>
      <div class="dtabs d-flex align-items-start">
        <button class="dtab"><svg width="16" height="16"><use href="#chairbox"/></svg>Choreogra...</button>
        <button class="dtab now"><svg width="16" height="16"><use href="#manbox"/></svg><span class="flex-grow-1 text-center">Model1</span></button>
      </div>
    </section>

    <aside class="side" role="toolbar" aria-label="Modeling tools">
      <div class="sidebox">
        <div class="sgrip"></div>
        <button class="tb on" aria-label="Edit"><svg width="16" height="16"><use href="#arrow"/></svg></button>
        <button class="tb" aria-label="Add"><svg width="16" height="16"><use href="#arrowp"/></svg></button>
        <button class="tb off" aria-label="Break"><svg width="16" height="16"><use href="#n1"/></svg></button>
        <button class="tb off" aria-label="Delete points"><svg width="16" height="16"><use href="#n2"/></svg></button>
        <button class="tb off" aria-label="Insert"><svg width="16" height="16"><use href="#n3"/></svg></button>
        <button class="tb" aria-label="Extrude"><svg width="16" height="16"><use href="#tripts"/></svg></button>
        <button class="tb" aria-label="Lathe"><svg width="16" height="16"><use href="#tripts"/></svg></button>
        <button class="tb" aria-label="Lasso"><svg width="16" height="16"><use href="#lasso"/></svg></button>
        <button class="tb" aria-label="Polygon lasso"><svg width="16" height="16"><use href="#poly"/></svg></button>
        <button class="tb" aria-label="Patch select"><svg width="16" height="16"><use href="#house"/></svg></button>
        <button class="tb" aria-label="Hide"><svg width="18" height="16"><use href="#eye"/></svg></button>
        <button class="tb" aria-label="Lock"><svg width="16" height="16"><use href="#lock"/></svg></button>
        <button class="tb" aria-label="Mirror"><svg width="16" height="16"><use href="#rows"/></svg></button>
        <button class="tb off" aria-label="Mesh"><svg width="16" height="16"><use href="#mesh"/></svg></button>
        <button class="tb off" aria-label="Points"><svg width="16" height="16"><use href="#pts"/></svg></button>
      </div>
    </aside>
  </main>

  <div class="bottom d-flex align-items-center flex-shrink-0 off" role="toolbar" aria-label="Animation">
    <span class="grip"></span>
    <button class="tb on" aria-label="Key model"><svg width="16" height="16"><use href="#diam"/></svg></button>
    <button class="tb on" aria-label="Key scale"><svg width="16" height="16"><use href="#scale"/></svg></button>
    <button class="tb on" aria-label="Key rotate"><svg width="16" height="16"><use href="#rot"/></svg></button>
    <button class="tb on" aria-label="Key constraints"><svg width="16" height="16"><use href="#rings"/></svg></button>
    <button class="tb" aria-label="Key muscle"><svg width="16" height="16"><use href="#arm"/></svg></button>
    <button class="tb" aria-label="Key bias"><svg width="16" height="16"><use href="#seg"/></svg></button>
    <button class="tb on" aria-label="Branch"><svg width="18" height="16"><use href="#brk"/></svg></button>
    <button class="tb on etc">ETC</button>
    <span class="sep"></span>
    <button class="tb" aria-label="Key bone"><svg width="16" height="16"><use href="#boxes"/></svg></button>
    <button class="tb" aria-label="Key branch"><svg width="16" height="16"><use href="#boxes"/></svg></button>
    <button class="tb on" aria-label="Key model filter"><svg width="16" height="16"><use href="#plane"/></svg></button>
    <span class="sep ms-1"></span>
    <button class="tb" aria-label="Make keyframe"><svg width="18" height="16"><use href="#key"/></svg></button>
    <button class="tb" aria-label="Delete keyframe"><svg width="18" height="16"><use href="#keys"/></svg></button>
    <span class="sep mx-1"></span>
    <div class="slide d-flex justify-content-between flex-shrink-0">
      <button class="sbtn" aria-label="Earlier"><svg width="8" height="8"><use href="#ch-l"/></svg></button>
      <button class="sbtn" aria-label="Later"><svg width="8" height="8"><use href="#ch-r"/></svg></button>
    </div>
    <span class="sep"></span>
    <button class="tb" aria-label="First frame"><svg width="10" height="7"><use href="#first"/></svg></button>
    <button class="tb" aria-label="Previous frame"><svg width="8" height="7"><use href="#prev"/></svg></button>
    <span class="sep ms-1"></span>
    <input class="frameno flex-shrink-0" type="text" aria-label="Frame">
    <span class="sep"></span>
    <button class="tb" aria-label="Play"><svg width="8" height="7"><use href="#play"/></svg></button>
    <button class="tb on" aria-label="Loop"><svg width="16" height="16"><use href="#loop"/></svg></button>
    <span class="sep"></span>
    <button class="tb" aria-label="Next frame"><svg width="8" height="7"><use href="#next"/></svg></button>
    <button class="tb" aria-label="Last frame"><svg width="10" height="7"><use href="#last"/></svg></button>
    <span class="sep ms-2"></span>
  </div>

  <footer class="status d-flex align-items-center flex-shrink-0">
    <span class="me-auto ps-1">FPS: 290.7</span>
    <span class="cell c0"><svg width="12" height="12"><use href="#s-h"/></svg>3</span>
    <span class="cell c1 ps-2"><svg width="12" height="12"><use href="#s-v"/></svg>1</span>
    <span class="cell c2 ps-3 gap-0"><svg width="13" height="13"><use href="#s-r"/></svg>90</span>
    <span class="cell c1 ps-2 gap-1"><svg width="13" height="13"><use href="#s-y"/></svg>0</span>
    <span class="cell c1 ps-1"><svg width="13" height="13"><use href="#s-z"/></svg>0</span>
    <span class="cell c2 ps-3"><svg width="11" height="11"><use href="#zoomx"/></svg>340</span>
    <svg width="19" height="15"><path d="M12 12h3v2h-3zM7 12h3v2H7zM12 7h3v2h-3zM2 12h3v2H2zM7 7h3v2H7zM12 2h3v2h-3z" fill="#bfbba9"/></svg>
  </footer>
  </div>
</div>
</div>
<script src="https://cdn.jsdelivr.net/npm/bootstrap@5.3.0/dist/js/bootstrap.bundle.min.js"></script>
</body>
</html>
